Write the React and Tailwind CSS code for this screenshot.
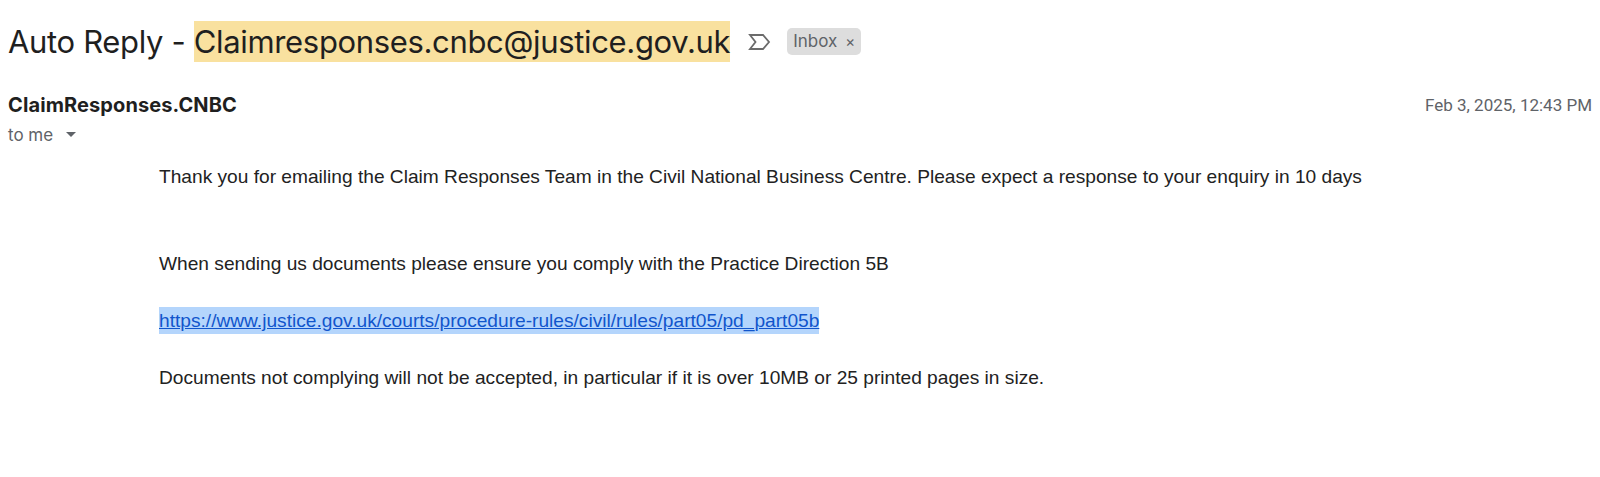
import React from "react";

const ImportantIcon = () => (
  <svg width="24" height="18" viewBox="0 0 24 18" fill="none">
    <path d="M2 2 L15 2 L21 9 L15 16 L2 16 L7.5 9 Z" stroke="#6b6b6b" strokeWidth="1.8" strokeLinejoin="miter" />
  </svg>
);

const App = () => {
  return (
    <div className="w-[1600px] h-[477px] bg-white overflow-hidden" style={{ fontFamily: "Arial" }}>
      <div className="flex items-center pl-2 pt-[21px]">
        <h1 className="text-[31px] leading-[41px] text-[#1f1f1f] font-['Inter',sans-serif] tracking-[-0.34px]">
          Auto Reply - <span className="inline-block bg-[#f9e19f] leading-[41px]">Claimresponses.cnbc@justice.gov.uk</span>
        </h1>
        <span className="ml-[18px] flex items-center">
          <ImportantIcon />
        </span>
        <span className="ml-[15px] flex items-center gap-2 h-[27px] px-[6px] rounded-[5px] bg-[#dddddd] text-[#5f6368] text-[17px] font-['Inter',sans-serif]">
          Inbox
          <span className="text-[15px] leading-none">×</span>
        </span>
      </div>

      <div className="flex justify-between items-start pl-2 pr-2 mt-[31px]">
        <div className="font-['Inter',sans-serif]">
          <div className="text-[20px] leading-[24px] font-bold text-[#1f1f1f] tracking-[0.1px]">ClaimResponses.CNBC</div>
          <div className="flex items-center gap-2 mt-[8px] text-[17px] leading-[20px] text-[#5f6368]">
            to me
            <svg width="12" height="8" viewBox="0 0 12 8" className="ml-1">
              <path d="M1 1 L11 1 L6 6 Z" fill="#5f6368" />
            </svg>
          </div>
        </div>
        <div className="font-['Roboto',sans-serif] text-[17px] leading-[24px] text-[#5f6368]">Feb 3, 2025, 12:43 PM</div>
      </div>

      <div className="pl-[159px] mt-[20px] text-[19.15px] leading-[23px] text-[#222222] font-['Liberation_Sans',Arial,sans-serif]">
        <p>Thank you for emailing the Claim Responses Team in the Civil National Business Centre. Please expect a response to your enquiry in 10 days</p>
        <p className="mt-[64px]">When sending us documents please ensure you comply with the Practice Direction 5B</p>
        <p className="mt-[34px]">
          <a href="#" className="bg-[#b4d5fc] text-[#1155cc] underline py-[3px]">
            https://www.justice.gov.uk/courts/procedure-rules/civil/rules/part05/pd_part05b
          </a>
        </p>
        <p className="mt-[34px]">Documents not complying will not be accepted, in particular if it is over 10MB or 25 printed pages in size.</p>
      </div>
    </div>
  );
};

export default App;
